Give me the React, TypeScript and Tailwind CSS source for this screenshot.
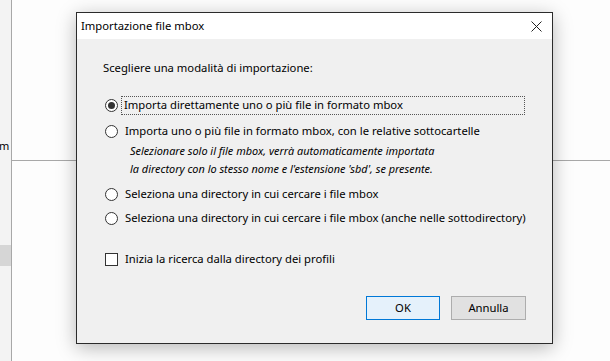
const Radio = ({ checked }: { checked?: boolean }) => (
  <span className="w-[13px] h-[13px] rounded-full border border-[#333] bg-white flex items-center justify-center shrink-0">
    {checked && <span className="w-[7px] h-[7px] rounded-full bg-[#333]"></span>}
  </span>
);

const App = () => {
  return (
    <div
      className="relative w-[610px] h-[361px] overflow-hidden bg-[#fdfdfd] text-[11.25px] text-black"
      style={{ fontFamily: '"Noto Sans", "Open Sans", sans-serif' }}
    >
      {/* background window */}
      <div className="flex h-full">
        <div className="w-[12px] h-full bg-[#f3f3f3] border-r border-[#a8a8a8] flex flex-col overflow-hidden">
          <div className="h-[138px]"></div>
          <div className="text-[11px] leading-[16px] -ml-[1px]">m</div>
          <div className="h-[91px]"></div>
          <div className="h-[21px] bg-[#d6d6d6]"></div>
        </div>
        <div className="flex-1 flex flex-col">
          <div className="h-[161px] border-b border-[#a8a8a8]"></div>
        </div>
      </div>

      {/* dialog */}
      <div className="absolute left-[76px] top-[12px] w-[477px] h-[332px] border border-[#2b2b2b] bg-[#f0f0f0] shadow-[0_4px_18px_rgba(0,0,0,0.28)] flex flex-col">
        <div className="h-[26px] bg-white flex items-center justify-between pl-[4px] pr-[10px]">
          <span>Importazione file mbox</span>
          <svg width="11" height="11" viewBox="0 0 11 11">
            <path d="M0.5 0.5 L10.5 10.5 M10.5 0.5 L0.5 10.5" stroke="#222" strokeWidth="1" />
          </svg>
        </div>
        <div className="flex flex-col pl-[26px] pt-[21px]">
          <div className="leading-[16px]">Scegliere una modalità di importazione:</div>
          <div className="flex items-center h-[20px] gap-[3px] pl-[2px] mt-[19px]">
            <Radio checked />
            <span className="border border-dotted border-[#555] px-[2px] h-[19px] flex items-center w-[404px]">
              Importa direttamente uno o più file in formato mbox
            </span>
          </div>
          <div className="flex items-center h-[20px] gap-[7px] pl-[2px] mt-[6px]">
            <Radio />
            <span>Importa uno o più file in formato mbox, con le relative sottocartelle</span>
          </div>
          <div className="italic text-[10.9px] leading-[18px] pl-[27px] mt-[1px]">
            <div>Selezionare solo il file mbox, verrà automaticamente importata</div>
            <div>la directory con lo stesso nome e l'estensione 'sbd', se presente.</div>
          </div>
          <div className="flex items-center h-[20px] gap-[7px] pl-[2px] mt-[6px]">
            <Radio />
            <span>Seleziona una directory in cui cercare i file mbox</span>
          </div>
          <div className="flex items-center h-[20px] gap-[7px] pl-[2px] mt-[4px]">
            <Radio />
            <span>Seleziona una directory in cui cercare i file mbox (anche nelle sottodirectory)</span>
          </div>
          <div className="flex items-center h-[20px] gap-[7px] pl-[2px] mt-[21px]">
            <span className="w-[13px] h-[13px] border border-[#333] bg-white shrink-0"></span>
            <span>Inizia la ricerca dalla directory dei profili</span>
          </div>
        </div>
        <div className="flex justify-end gap-[11px] pr-[26px] mt-[27px]">
          <button className="w-[74px] h-[24px] border border-[#0078d7] bg-[#e5f1fb]">OK</button>
          <button className="w-[75px] h-[24px] border border-[#adadad] bg-[#e1e1e1]">Annulla</button>
        </div>
      </div>
    </div>
  );
};

export default App;
